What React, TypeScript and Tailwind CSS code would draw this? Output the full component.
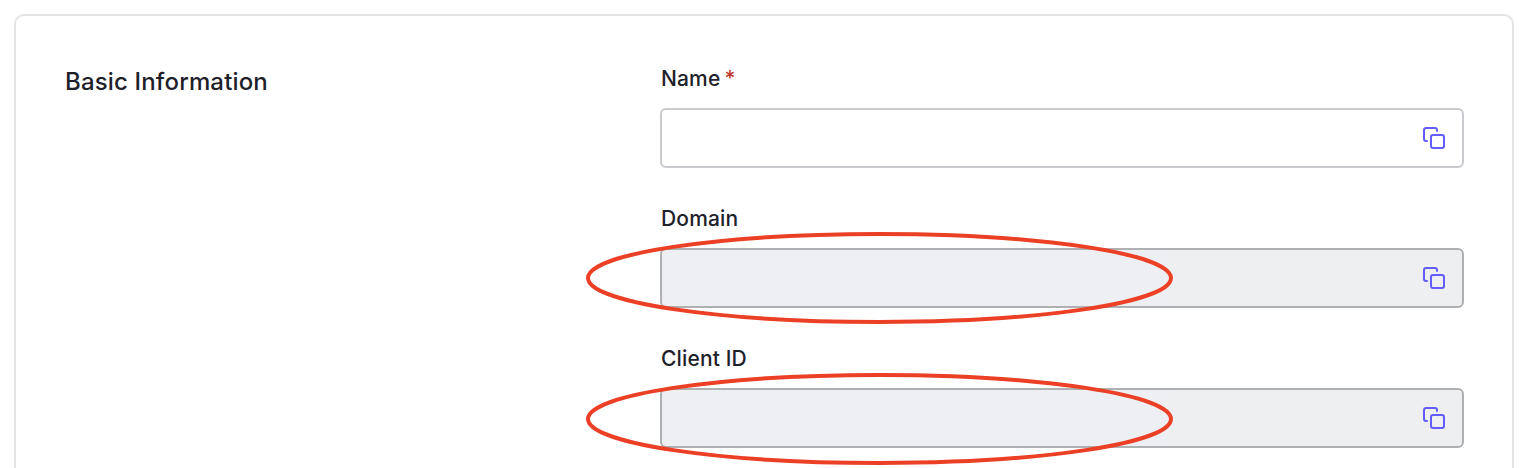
import React from "react";

function CopyIcon() {
  return (
    <svg width="24" height="24" viewBox="0 0 24 24" fill="none" stroke="#635dff" strokeWidth="2" strokeLinecap="round" strokeLinejoin="round">
      <rect x="9" y="9" width="13" height="13" rx="2" />
      <path d="M5 15H4a2 2 0 0 1-2-2V4a2 2 0 0 1 2-2h9a2 2 0 0 1 2 2v1" />
    </svg>
  );
}

type FieldProps = {
  label: string;
  required?: boolean;
  disabled?: boolean;
  ringCenter?: number;
};

function Field({ label, required = false, disabled = false, ringCenter = 53 }: FieldProps) {
  return (
    <div className="relative h-[140px]">
      <div className="flex h-[44px] items-start pl-px text-[21px] leading-[29px] font-medium tracking-[0.15px] text-[#1e212a]">
        {label}
        {required && <span className="ml-[4px] text-[#c0392f]">*</span>}
      </div>
      <div
        className={
          "flex h-[60px] items-center justify-end rounded-[6px] border-2 pr-[16px] " +
          (disabled ? "border-[#afb0b2] bg-linear-to-r from-[#eeeff3] from-60% to-[#eeeff1] to-65%" : "border-[#c9cace] bg-white")
        }
      >
        <CopyIcon />
      </div>
      {disabled && (
        <svg className="absolute top-[21px] left-[-76px]" width="592" height="106" viewBox="0 0 592 106" fill="none">
          <ellipse cx="295.5" cy={ringCenter} rx="291.5" ry="44" stroke="#eb4025" strokeWidth="4" />
        </svg>
      )}
    </div>
  );
}

export default function App() {
  return (
    <div className="h-[468px] overflow-hidden bg-white px-[14px] pt-[14px] font-['Inter',sans-serif]">
      <div className="flex h-[600px] w-[1500px] rounded-[10px] border-2 border-[#e3e3e5] pt-[48px] pl-[49px]">
        <h2 className="w-[595px] shrink-0 text-[24px] leading-[36px] font-medium tracking-[0.16px] text-[#1e212a]">Basic Information</h2>
        <div className="w-[804px]">
          <Field label="Name" required />
          <Field label="Domain" disabled />
          <Field label="Client ID" disabled ringCenter={54} />
        </div>
      </div>
    </div>
  );
}
